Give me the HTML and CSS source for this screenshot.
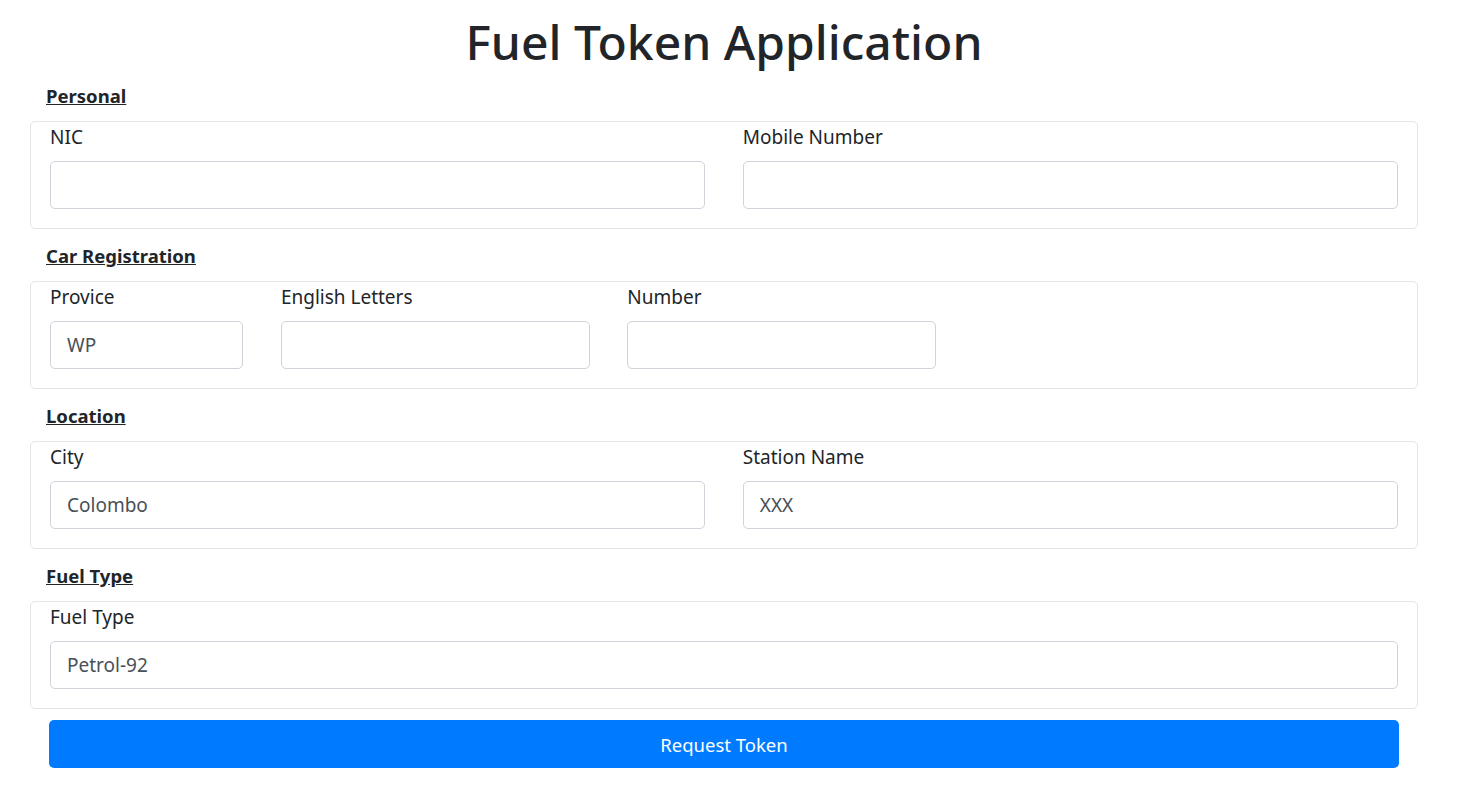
FILE: index.html
```html
<!DOCTYPE html>
<html lang="en">
<head>
<meta charset="utf-8">
<title>Fuel Token Application</title>
<link rel="stylesheet" href="styles.css">
</head>
<body>
<h1 class="title">Fuel Token Application</h1>
<form class="form">
  <h2 class="section-title">Personal</h2>
  <div class="section-box">
    <div class="grid">
      <div class="field span-6"><label class="label">NIC</label><input class="input" type="text"></div>
      <div class="field span-6"><label class="label">Mobile Number</label><input class="input" type="text"></div>
    </div>
  </div>

  <h2 class="section-title">Car Registration</h2>
  <div class="section-box">
    <div class="grid">
      <div class="field span-2"><label class="label">Provice</label><input class="input" type="text" value="WP"></div>
      <div class="field span-3"><label class="label">English Letters</label><input class="input" type="text"></div>
      <div class="field span-3"><label class="label">Number</label><input class="input" type="text"></div>
    </div>
  </div>

  <h2 class="section-title">Location</h2>
  <div class="section-box">
    <div class="grid">
      <div class="field span-6"><label class="label">City</label><input class="input" type="text" value="Colombo"></div>
      <div class="field span-6"><label class="label">Station Name</label><input class="input" type="text" value="XXX"></div>
    </div>
  </div>

  <h2 class="section-title">Fuel Type</h2>
  <div class="section-box">
    <div class="grid">
      <div class="field span-12"><label class="label">Fuel Type</label><input class="input" type="text" value="Petrol-92"></div>
    </div>
  </div>

  <button class="btn" type="button">Request Token</button>
</form>
</body>
</html>
```

FILE: styles.css
```css
* { box-sizing: border-box; }

body {
  margin: 0;
  background: #ffffff;
  color: #212529;
  font-family: "Noto Sans", "Open Sans", sans-serif;
  font-size: 19px;
  line-height: 1.5;
}

.title {
  margin: 12px 0 0 0;
  padding-right: 9px;
  font-size: 48px;
  line-height: 60px;
  font-weight: 500;
  text-align: center;
  color: #212529;
}

.form {
  margin-left: 30px;
  width: 1388px;
}

.section-title {
  margin: 12px 0 10px 0;
  padding-left: 16px;
  font-size: 18.5px;
  line-height: 30px;
  height: 30px;
  font-weight: 700;
  text-decoration: underline;
}

.form > .section-title:first-child {
  margin-top: 9px;
}

.section-box {
  border: 1px solid #e3e6e9;
  border-radius: 5px;
  padding: 0 19px 19px 19px;
}

.grid {
  display: grid;
  grid-template-columns: repeat(12, 1fr);
  column-gap: 37.5px;
}

.field { display: flex; flex-direction: column; }
.span-2 { grid-column: span 2; }
.span-3 { grid-column: span 3; }
.span-6 { grid-column: span 6; }
.span-12 { grid-column: span 12; }

.label {
  margin-bottom: 9px;
  line-height: 30px;
  height: 30px;
  font-size: 19px;
}

.input {
  height: 48px;
  width: 100%;
  border: 1px solid #ced4da;
  border-radius: 5px;
  padding: 0 16px;
  font-family: inherit;
  font-size: 19px;
  color: #495057;
  background: #fff;
}

.btn {
  display: block;
  margin: 11px 0 0 19px;
  width: 1350px;
  height: 48px;
  border: 0;
  border-radius: 5px;
  background: #007bff;
  color: #fff;
  font-family: inherit;
  font-size: 18.5px;
}
```
